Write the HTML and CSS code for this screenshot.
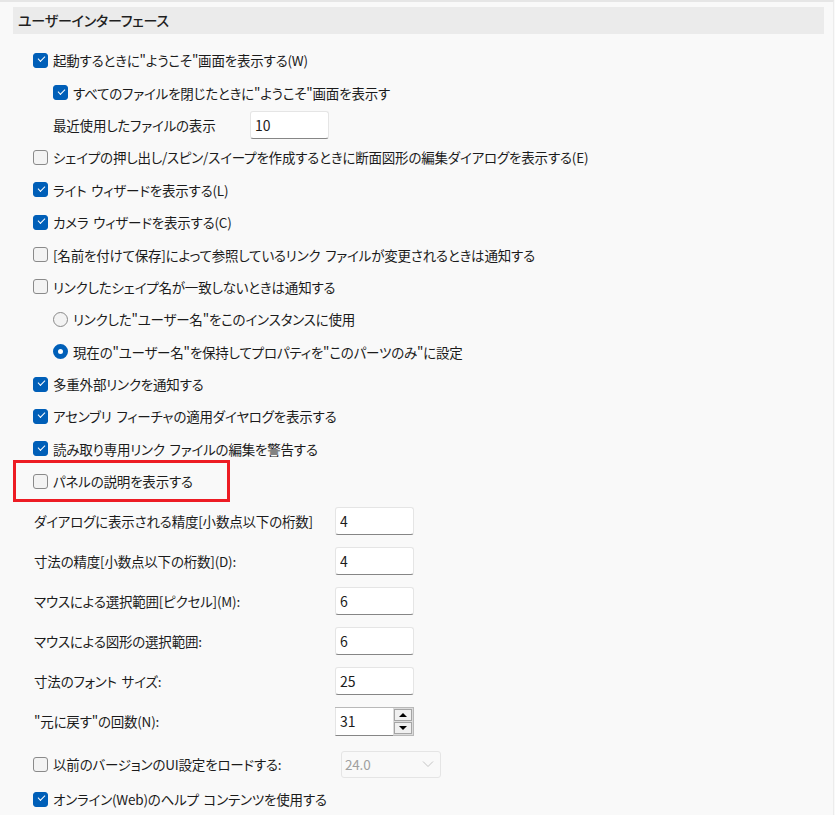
FILE: index.html
```html
<!DOCTYPE html>
<html lang="ja">
<head>
  <meta charset="UTF-8">
  <title>ユーザーインターフェース</title>
  <link rel="stylesheet" href="styles.css">
</head>
<body>
  <div class="panel">
    <div class="section-header">ユーザーインターフェース</div>

    <div class="options">
      <label class="row">
        <span class="check on"></span>起動するときに"ようこそ"画面を表示する(W)
      </label>
      <label class="row sub">
        <span class="check on"></span>すべてのファイルを閉じたときに"ようこそ"画面を表示す
      </label>
      <div class="row sub recent">
        <span class="recent-label">最近使用したファイルの表示</span>
        <input class="field" type="text" value="10">
      </div>
      <label class="row">
        <span class="check"></span>シェイプの押し出し/スピン/スイープを作成するときに断面図形の編集ダイアログを表示する(E)
      </label>
      <label class="row">
        <span class="check on"></span>ライト ウィザードを表示する(L)
      </label>
      <label class="row">
        <span class="check on"></span>カメラ ウィザードを表示する(C)
      </label>
      <label class="row">
        <span class="check"></span>[名前を付けて保存]によって参照しているリンク ファイルが変更されるときは通知する
      </label>
      <label class="row">
        <span class="check"></span>リンクしたシェイプ名が一致しないときは通知する
      </label>
      <label class="row sub">
        <span class="radio"></span>リンクした"ユーザー名"をこのインスタンスに使用
      </label>
      <label class="row sub">
        <span class="radio on"></span>現在の"ユーザー名"を保持してプロパティを"このパーツのみ"に設定
      </label>
      <label class="row">
        <span class="check on"></span>多重外部リンクを通知する
      </label>
      <label class="row">
        <span class="check on"></span>アセンブリ フィーチャの適用ダイヤログを表示する
      </label>
      <label class="row">
        <span class="check on"></span>読み取り専用リンク ファイルの編集を警告する
      </label>
      <label class="row highlight">
        <span class="check"></span>パネルの説明を表示する
      </label>
    </div>

    <div class="numbers">
      <div class="num-row">
        <span class="num-label">ダイアログに表示される精度[小数点以下の桁数]</span>
        <input class="field" type="text" value="4">
      </div>
      <div class="num-row">
        <span class="num-label">寸法の精度[小数点以下の桁数](D):</span>
        <input class="field" type="text" value="4">
      </div>
      <div class="num-row">
        <span class="num-label">マウスによる選択範囲[ピクセル](M):</span>
        <input class="field" type="text" value="6">
      </div>
      <div class="num-row">
        <span class="num-label">マウスによる図形の選択範囲:</span>
        <input class="field" type="text" value="6">
      </div>
      <div class="num-row">
        <span class="num-label">寸法のフォント サイズ:</span>
        <input class="field" type="text" value="25">
      </div>
      <div class="num-row">
        <span class="num-label">"元に戻す"の回数(N):</span>
        <div class="spinner">
          <input class="field spin-field" type="text" value="31">
          <div class="spin-buttons">
            <span class="spin-btn"><span class="arrow up"></span></span>
            <span class="spin-btn"><span class="arrow down"></span></span>
          </div>
        </div>
      </div>
    </div>

    <div class="legacy-row">
      <label class="legacy-label"><span class="check"></span>以前のバージョンのUI設定をロードする:</label>
      <div class="combo">
        <span>24.0</span>
        <svg width="12" height="8" viewBox="0 0 12 8"><path d="M1 1.5 L6 6.5 L11 1.5" fill="none" stroke="#c4c4c4" stroke-width="1"/></svg>
      </div>
    </div>
    <label class="row last">
      <span class="check on"></span>オンライン(Web)のヘルプ コンテンツを使用する
    </label>
  </div>
</body>
</html>
```

FILE: styles.css
```css
body {
  margin: 0;
  background: #f9f9f9;
  font-family: "Noto Sans CJK JP", "Noto Sans", sans-serif;
  font-size: 13.5px;
  letter-spacing: -0.2px;
  word-spacing: 2px;
  color: #1b1b1b;
  font-feature-settings: "palt";
}
.panel {
  width: 834px;
  height: 815px;
  box-sizing: border-box;
  border-top: 2px solid #e6e6e6;
  border-right: 1px solid #ececec;
  padding-top: 5px;
  overflow: hidden;
}
.section-header {
  margin: 0 9px 0 13px;
  height: 27px;
  line-height: 27px;
  padding-left: 5px;
  background: #ebebeb;
  font-size: 14px;
  font-weight: 500;
  color: #1f1f1f;
}
.options {
  margin-top: 10px;
  display: flex;
  flex-direction: column;
}
.row {
  display: flex;
  align-items: center;
  height: 32.4px;
  padding-left: 33px;
  white-space: nowrap;
}
.row.sub {
  padding-left: 53px;
}
.check {
  flex: none;
  width: 13px;
  height: 13px;
  margin-right: 5px;
  border: 1px solid #8a8a8a;
  border-radius: 3px;
  background: #f3f3f3;
  position: relative;
}
.check.on {
  background: #005fb8;
  border-color: #005fb8;
}
.check.on::after {
  content: "";
  position: absolute;
  left: 3.5px;
  top: 2.5px;
  width: 6px;
  height: 3px;
  border-left: 1.3px solid #fff;
  border-bottom: 1.3px solid #fff;
  transform: rotate(-45deg);
}
.radio {
  flex: none;
  width: 13px;
  height: 13px;
  margin-right: 5px;
  border: 1px solid #8a8a8a;
  border-radius: 50%;
  background: #f3f3f3;
}
.radio.on {
  width: 5px;
  height: 5px;
  border: 5px solid #005fb8;
  background: #fff;
}
.recent-label {
  width: 197px;
}
.field {
  box-sizing: border-box;
  width: 79px;
  height: 28px;
  padding: 0 0 0 4px;
  border: 1px solid #e5e5e5;
  border-bottom-color: #868686;
  border-radius: 3px;
  background: #fff;
  font: inherit;
  font-size: 14px;
  color: #1b1b1b;
  outline: none;
}
.highlight {
  width: 217px;
  box-sizing: border-box;
  margin-left: 13px;
  padding-left: 17px;
  border: 3px solid #ed1c24;
  height: 42px;
  margin-top: -5px;
  margin-bottom: -5px;
}
.numbers {
  margin-top: 4px;
  display: flex;
  flex-direction: column;
}
.num-row {
  display: flex;
  align-items: center;
  height: 40px;
  padding-left: 34px;
}
.num-label {
  width: 301px;
  white-space: nowrap;
}
.spinner {
  display: flex;
  height: 29px;
  border: 1px solid #b9b9b9;
  border-left: none;
  box-sizing: border-box;
}
.spin-field {
  width: 58px;
  height: 28px;
  border-top: none;
  border-radius: 0;
  border-right: none;
}
.spin-buttons {
  display: flex;
  flex-direction: column;
  width: 20px;
  padding: 1px;
  gap: 1px;
  box-sizing: border-box;
  background: #dcdcdc;
}
.spin-btn {
  flex: 1;
  display: flex;
  align-items: center;
  justify-content: center;
  background: #f0f0f0;
  border: 1px solid #a5a5a5;
}
.arrow {
  width: 0;
  height: 0;
  border-left: 4px solid transparent;
  border-right: 4px solid transparent;
}
.arrow.up {
  border-bottom: 4px solid #000;
}
.arrow.down {
  border-top: 4px solid #000;
}
.legacy-row {
  display: flex;
  align-items: center;
  height: 42px;
  padding-left: 33px;
  margin-top: 2px;
}
.legacy-label {
  display: flex;
  align-items: center;
  width: 308px;
  white-space: nowrap;
}
.combo {
  box-sizing: border-box;
  width: 100px;
  height: 27px;
  display: flex;
  align-items: center;
  justify-content: space-between;
  padding: 0 6px 0 3px;
  border: 1px solid #e5e5e5;
  border-radius: 3px;
  background: #f9f9f9;
  color: #a0a0a0;
}
.row.last {
  height: 28px;
}
```
